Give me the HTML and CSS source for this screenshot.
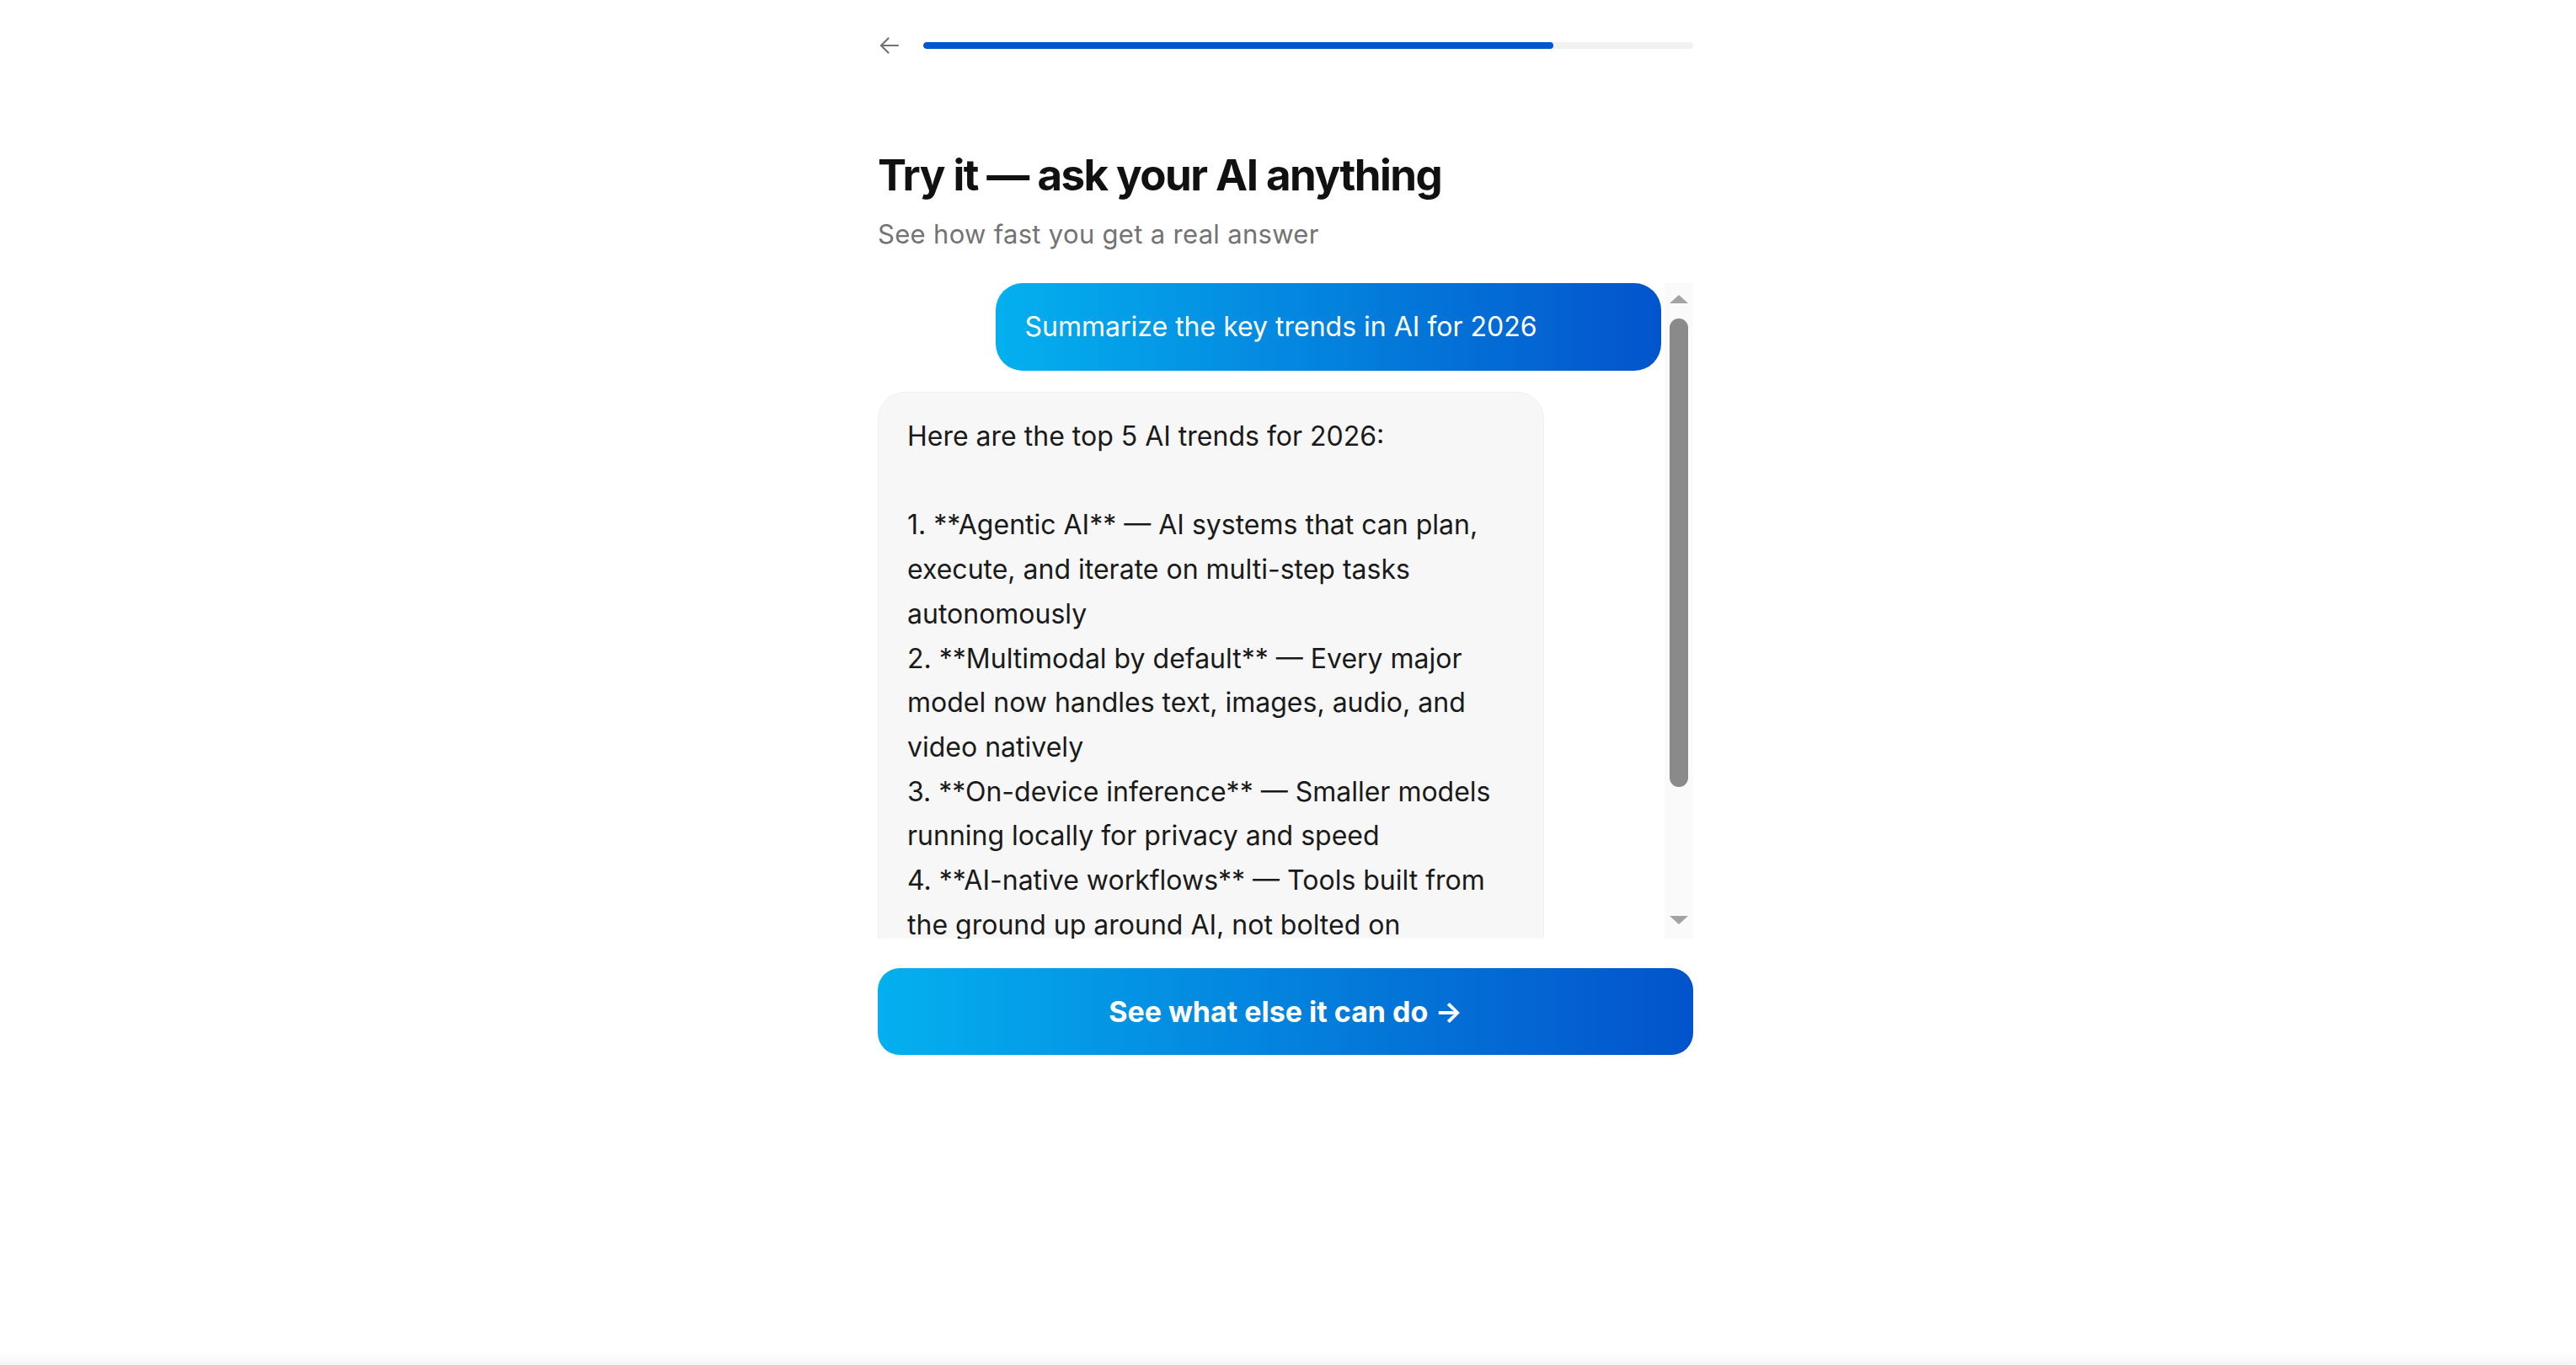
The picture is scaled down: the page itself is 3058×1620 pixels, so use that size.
FILE: index.html
```html
<!DOCTYPE html>
<html lang="en">
<head>
    <meta charset="UTF-8">
    <meta name="viewport" content="width=device-width, initial-scale=1.0">
    <title>Try it - ask your AI anything</title>
    <link rel="stylesheet" href="styles.css">
</head>
<body>
    <div class="page">
        <div class="top-bar">
            <button class="back-btn" aria-label="Back">
                <svg width="24" height="20" viewBox="0 0 24 20" fill="none" stroke="#727272" stroke-width="2.2" stroke-linecap="round" stroke-linejoin="round">
                    <path d="M22 10H2"/>
                    <path d="M10.5 1.5L2 10l8.5 8.5"/>
                </svg>
            </button>
            <div class="progress">
                <div class="progress-fill" style="width: 81.8%"></div>
            </div>
        </div>

        <h1 class="title">Try it — ask your AI anything</h1>
        <p class="subtitle">See how fast you get a real answer</p>

        <div class="chat-box">
            <div class="chat-messages">
                <div class="msg user">Summarize the key trends in AI for 2026</div>
                <div class="msg ai">Here are the top 5 AI trends for 2026:

1. **Agentic AI** — AI systems that can plan, execute, and iterate on multi-step tasks autonomously
2. **Multimodal by default** — Every major model now handles text, images, audio, and video natively
3. **On-device inference** — Smaller models running locally for privacy and speed
4. **AI-native workflows** — Tools built from the ground up around AI, not bolted on
5. **Smarter regulation** — Clearer rules for transparency, safety and data use</div>
            </div>
            <div class="scroll-track">
                <span class="scroll-arrow up"></span>
                <div class="scroll-rail">
                    <div class="scroll-thumb"></div>
                </div>
                <span class="scroll-arrow down"></span>
            </div>
        </div>

        <button class="cta-btn">See what else it can do →</button>
    </div>
</body>
</html>
```

FILE: styles.css
```css
html {
    background: linear-gradient(to bottom, #ffffff calc(100% - 16px), #f5f5f5 100%);
    min-height: 100%;
}
body {
    margin: 0;
    padding: 0 6px 0 0;
    min-height: 100vh;
    font-family: Inter, "Noto Sans", sans-serif;
    color: #141414;
}
.page {
    width: 968px;
    margin: 0 auto;
    padding-top: 42px;
}

/* header: back arrow + progress */
.top-bar {
    display: flex;
    align-items: center;
    height: 24px;
}
.back-btn {
    display: flex;
    align-items: center;
    justify-content: center;
    width: 24px;
    height: 24px;
    margin-left: 2px;
    padding: 0;
    border: none;
    background: none;
    cursor: pointer;
}
.progress {
    flex: 1;
    height: 8px;
    margin-left: 28px;
    background: #f2f2f2;
    border-radius: 4px;
    overflow: hidden;
}
.progress-fill {
    height: 100%;
    background: #0057cf;
    border-radius: 4px;
}

.title {
    margin: 111px 0 0;
    font-size: 51px;
    line-height: 62px;
    font-weight: 700;
    letter-spacing: -0.03em;
    color: #111;
}
.subtitle {
    margin: 18px 0 0;
    font-size: 31px;
    line-height: 42px;
    letter-spacing: 0.01em;
    color: #737373;
}

/* chat */
.chat-box {
    display: flex;
    height: 778px;
    margin-top: 37px;
}
.chat-messages {
    flex: 1;
    display: flex;
    flex-direction: column;
    gap: 25px;
    padding-right: 4px;
    overflow: hidden;
}
.msg {
    width: 85%;
    box-sizing: border-box;
    flex-shrink: 0;
    font-size: 32px;
    border-radius: 32px;
}
.msg.user {
    align-self: flex-end;
    padding: 28px 36px 28px 35px;
    line-height: 48px;
    color: #fff;
    background: linear-gradient(90deg, #04b0ef 0%, #0354cc 100%);
}
.msg.ai {
    align-self: flex-start;
    padding: 26px 36px 26px 34px;
    line-height: 52.7px;
    white-space: pre-wrap;
    color: #1a1a1a;
    background: #f7f7f7;
    border: 1px solid #f0f0f0;
}

.scroll-track {
    width: 34px;
    display: flex;
    flex-direction: column;
    align-items: center;
    padding: 14px 0 17px;
    box-sizing: border-box;
    background: #fafafa;
}
.scroll-arrow {
    width: 0;
    height: 0;
    border-left: 11px solid transparent;
    border-right: 11px solid transparent;
}
.scroll-arrow.up {
    border-bottom: 10px solid #a3a3a3;
}
.scroll-arrow.down {
    border-top: 10px solid #a3a3a3;
}
.scroll-rail {
    flex: 1;
    padding-top: 18px;
}
.scroll-thumb {
    width: 22px;
    height: 556px;
    border-radius: 11px;
    background: #8a8a8a;
}

.cta-btn {
    display: block;
    width: 100%;
    height: 103px;
    margin-top: 35px;
    border: none;
    border-radius: 26px;
    background: linear-gradient(90deg, #04b0ef 0%, #0353cb 100%);
    color: #fff;
    font-family: Inter, "Noto Sans", sans-serif;
    font-size: 34px;
    font-weight: 700;
    cursor: pointer;
}
```
